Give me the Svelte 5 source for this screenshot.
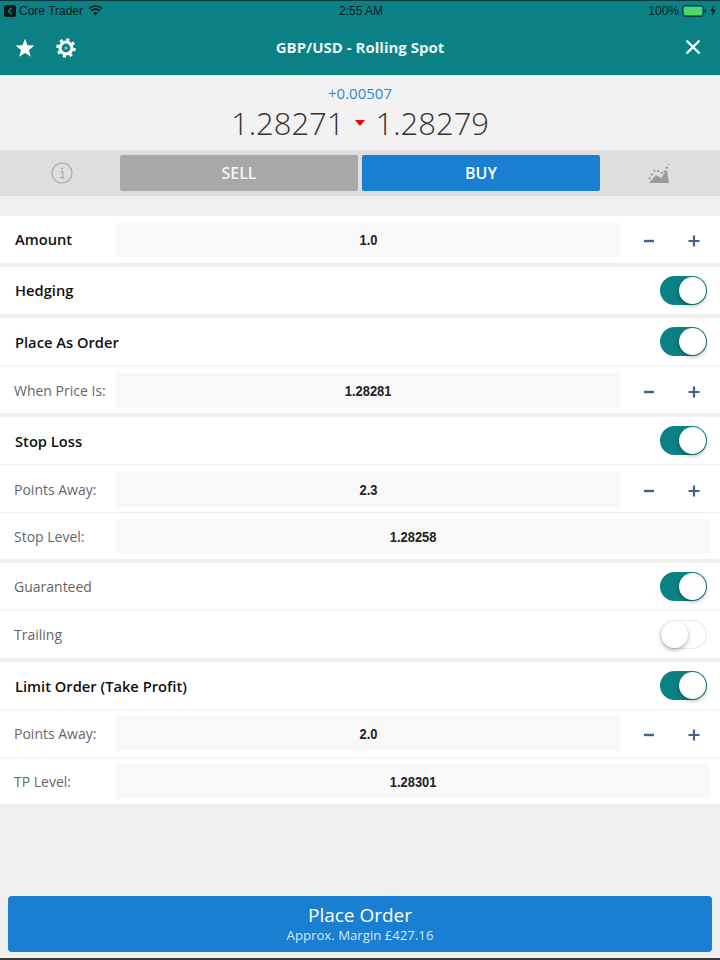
<script>
  const groups = [
    [{ label: 'Amount', bold: true, value: '1.0', steppers: true }],
    [{ label: 'Hedging', bold: true, toggle: true }],
    [
      { label: 'Place As Order', bold: true, toggle: true },
      { label: 'When Price Is:', value: '1.28281', steppers: true, nudge: true }
    ],
    [
      { label: 'Stop Loss', bold: true, toggle: true },
      { label: 'Points Away:', value: '2.3', steppers: true, nudge: true },
      { label: 'Stop Level:', value: '1.28258' }
    ],
    [
      { label: 'Guaranteed', toggle: true },
      { label: 'Trailing', toggle: 'off' }
    ],
    [
      { label: 'Limit Order (Take Profit)', bold: true, toggle: true },
      { label: 'Points Away:', value: '2.0', steppers: true },
      { label: 'TP Level:', value: '1.28301' }
    ]
  ]
</script>

<div class="page">
  <header class="top">
    <div class="status">
      <div class="status_side">
        <svg class="back" width="12" height="12" viewBox="0 0 12 12">
          <rect width="12" height="12" rx="2.5" fill="#0a1a1c" />
          <path d="M7.4 3 L4.6 6 L7.4 9" fill="none" stroke="#0b8185" stroke-width="1.6" />
        </svg>
        <span>Core Trader</span>
        <svg class="wifi" width="15" height="11" viewBox="0 0 15 11">
          <path d="M1 3.6 A9.4 9.4 0 0 1 14 3.6" fill="none" stroke="#0a1a1c" stroke-width="1.7" />
          <path d="M3.2 5.9 A6.2 6.2 0 0 1 11.8 5.9" fill="none" stroke="#0a1a1c" stroke-width="1.7" />
          <path d="M5.3 8 A3.1 3.1 0 0 1 9.7 8 L7.5 10.4 Z" fill="#0a1a1c" />
        </svg>
      </div>
      <div class="clock">2:55 AM</div>
      <div class="status_side right">
        <span>100%</span>
        <svg width="25" height="12" viewBox="0 0 25 12">
          <rect x="0.5" y="0.5" width="21" height="11" rx="2.5" fill="none" stroke="#0a3a3e" />
          <rect x="2" y="2" width="18" height="8" rx="1" fill="#4cd964" />
          <rect x="22.5" y="4" width="1.5" height="4" fill="#0a3a3e" />
        </svg>
        <svg width="6" height="11" viewBox="0 0 6 11">
          <path d="M3.8 0 L0.4 6.2 L2.6 6.2 L2 11 L5.6 4.6 L3.3 4.6 Z" fill="#0a1a1c" />
        </svg>
      </div>
    </div>
    <div class="title_bar">
      <div class="title_icons">
        <svg width="20" height="20" viewBox="0 0 20 20">
          <path d="M10 0.8 L12.5 7.2 L19.4 7.6 L14 12 L15.8 18.8 L10 15 L4.2 18.8 L6 12 L0.6 7.6 L7.5 7.2 Z" fill="#fff" />
        </svg>
        <svg width="20" height="20" viewBox="0 0 20 20">
          <circle cx="10" cy="10" r="6" fill="none" stroke="#fff" stroke-width="3.2" />
          <circle cx="10" cy="10" r="8.5" fill="none" stroke="#fff" stroke-width="2.6" stroke-dasharray="3.1 3.57" />
          <circle cx="10" cy="10" r="1.6" fill="#8cc4c6" />
        </svg>
      </div>
      <div class="title">GBP/USD - Rolling Spot</div>
      <svg class="close" width="16" height="16" viewBox="0 0 16 16">
        <path d="M1.5 1.5 L14.5 14.5 M14.5 1.5 L1.5 14.5" stroke="#fff" stroke-width="2.4" />
      </svg>
    </div>
  </header>

  <section class="prices">
    <div class="change">+0.00507</div>
    <div class="quote">
      <span>1.28271</span>
      <i class="arrow"></i>
      <span>1.28279</span>
    </div>
  </section>

  <section class="trade_bar">
    <div class="side_icon">
      <svg width="22" height="22" viewBox="0 0 22 22">
        <circle cx="11" cy="11" r="10" fill="none" stroke="#a8a8a8" stroke-width="1.2" />
        <circle cx="11" cy="6.6" r="1.1" fill="#a8a8a8" />
        <path d="M9.4 9.6 H11.8 V15.6 H13 M9.2 15.6 H11.8" fill="none" stroke="#a8a8a8" stroke-width="1.1" />
      </svg>
    </div>
    <button class="trade sell">SELL</button>
    <button class="trade buy">BUY</button>
    <div class="side_icon">
      <svg width="24" height="22" viewBox="0 0 24 22">
        <path d="M2 21 L9 13 L14 16 L20 8 L22 21 Z" fill="#9a9a9a" />
        <path d="M2 17 L8 8 L14 10 L16 12 L22 2" fill="none" stroke="#9a9a9a" stroke-width="2" stroke-dasharray="2 2.4" />
      </svg>
    </div>
  </section>

  <div class="form">
    {#each groups as group}
      <div class="group">
        {#each group as row}
          <div class="row" class:nudge={row.nudge}>
            <div class="label" class:bold={row.bold}>{row.label}</div>
            {#if row.value}
              <div class="value"><span>{row.value}</span></div>
            {/if}
            {#if row.steppers}
              <div class="steppers">
                <svg width="12" height="12" viewBox="0 0 12 12"><path d="M1 6 H11" stroke="#44608f" stroke-width="2.4" /></svg>
                <svg width="12" height="12" viewBox="0 0 12 12"><path d="M0.5 6 H11.5 M6 0.5 V11.5" stroke="#44608f" stroke-width="2.2" /></svg>
              </div>
            {/if}
            {#if row.toggle}
              <div class="toggle" class:off={row.toggle === 'off'}><i></i></div>
            {/if}
          </div>
        {/each}
      </div>
    {/each}
  </div>

  <div class="footer">
    <button class="place">
      <span class="place_title">Place Order</span>
      <span class="place_sub">Approx. Margin £427.16</span>
    </button>
  </div>
</div>

<style>
  :global(body) {
    margin: 0;
    background: #f0f0f0;
  }

  .page {
    height: 960px;
    box-sizing: border-box;
    display: flex;
    flex-direction: column;
    font-family: "Open Sans", sans-serif;
    background: #f0f0f0;
    border-bottom: 2px solid #3c3c3c;
    overflow: hidden;
  }

  .top {
    height: 75px;
    flex: none;
    background: #0b8185;
    border-top: 1px solid #0a3a3e;
    box-sizing: border-box;
  }

  .status {
    height: 19px;
    padding: 0 3px 0 4px;
    display: flex;
    align-items: center;
    justify-content: space-between;
    font-family: "Liberation Sans", sans-serif;
    font-size: 12px;
    color: #0a1a1c;
    position: relative;
  }

  .status_side {
    display: flex;
    align-items: center;
    gap: 3px;
  }

  .status_side.right {
    gap: 3px;
    padding-right: 1px;
  }

  .wifi {
    margin-left: 2px;
  }

  .clock {
    position: absolute;
    left: 2px;
    right: 0;
    text-align: center;
  }

  .title_bar {
    height: 55px;
    padding: 0 19px 0 15px;
    display: flex;
    align-items: center;
    justify-content: space-between;
    box-sizing: border-box;
    position: relative;
  }

  .title_icons {
    display: flex;
    gap: 21px;
  }

  .title {
    position: absolute;
    left: 0;
    right: 0;
    margin-top: -2px;
    text-align: center;
    font-size: 15px;
    font-weight: 700;
    color: #e9f4f4;
  }

  .close {
    margin-top: -2px;
  }

  .prices {
    height: 75px;
    flex: none;
    box-sizing: border-box;
    padding-top: 8px;
    background: #f2f2f2;
    border-top: 1px solid #e4e4e4;
    text-align: center;
  }

  .change {
    font-size: 15px;
    line-height: 19px;
    color: #2a88d8;
  }

  .quote {
    display: flex;
    justify-content: center;
    align-items: center;
    gap: 10.5px;
    font-size: 31px;
    font-weight: 300;
    line-height: 40px;
    color: #333;
  }

  .arrow {
    width: 0;
    height: 0;
    border-left: 5px solid transparent;
    border-right: 5px solid transparent;
    border-top: 6px solid #f00000;
  }

  .trade_bar {
    height: 46px;
    flex: none;
    display: grid;
    grid-template-columns: 116px 238px 238px 1fr;
    gap: 0 4px;
    align-items: center;
    background: #dedede;
    box-sizing: border-box;
  }

  .side_icon {
    display: flex;
    justify-content: center;
    align-items: center;
  }

  .side_icon:first-child {
    margin-right: -8px;
  }

  .side_icon:last-child {
    margin-right: 6px;
  }

  .trade {
    height: 36px;
    border: 0;
    border-radius: 2px;
    color: #fff;
    font-family: inherit;
    font-size: 16px;
    font-weight: 600;
    padding: 0;
  }

  .sell {
    background: #a8a8a8;
    color: #f5f5f5;
  }

  .buy {
    background: #1a7fd0;
  }

  .form {
    margin-top: 20px;
    display: flex;
    flex-direction: column;
    gap: 4px;
  }

  .group {
    background: #fff;
    display: flex;
    flex-direction: column;
  }

  .row {
    height: 47px;
    padding: 0 13px 0 14px;
    display: flex;
    align-items: center;
  }

  .row + .row {
    border-top: 1px solid #f0f0f0;
  }

  .row.nudge {
    height: 45px;
    padding-top: 2px;
  }

  .row:nth-child(3) {
    height: 46px;
  }

  .label {
    width: 102px;
    flex: none;
    font-size: 14px;
    color: #666;
    white-space: nowrap;
  }

  .label.bold {
    color: #111;
    font-weight: 600;
    font-size: 14.7px;
    margin-left: 1px;
    margin-right: -1px;
  }

  .group:nth-child(-n+2) .label.bold {
    margin-top: -2px;
  }

  .value {
    flex: 1;
    height: 35px;
    line-height: 35px;
    border-radius: 4px;
    background: #f8f8f8;
    text-align: center;
    font-family: "Liberation Sans", sans-serif;
    font-size: 15px;
    font-weight: 700;
    color: #222;
    margin-right: -3px;
  }

  .value span {
    display: inline-block;
    transform: scaleX(0.86);
  }

  .steppers {
    width: 100px;
    flex: none;
    display: flex;
    justify-content: space-between;
    padding: 3px 20px 0 23px;
    box-sizing: border-box;
    margin-right: -13px;
    margin-left: 3px;
  }

  .toggle {
    margin-left: auto;
    width: 47px;
    height: 29px;
    border-radius: 15px;
    background: #0b8185;
    position: relative;
  }

  .toggle i {
    position: absolute;
    top: 1px;
    right: 1px;
    width: 27px;
    height: 27px;
    border-radius: 50%;
    background: #fff;
    box-shadow: 0 2px 4px rgba(0, 0, 0, 0.3);
  }

  .toggle.off {
    background: #fff;
    box-shadow: inset 0 0 0 1px #eaeaea;
  }

  .toggle.off i {
    right: auto;
    left: 1px;
  }

  .footer {
    margin-top: auto;
    padding: 0 8px 6px;
  }

  .place {
    width: 100%;
    height: 56px;
    border: 0;
    border-radius: 4px;
    background: #1a7fd0;
    color: #fff;
    font-family: inherit;
    display: flex;
    flex-direction: column;
    align-items: center;
    justify-content: center;
    padding: 0 0 2px;
  }

  .place_title {
    font-size: 19px;
    font-weight: 500;
    line-height: 24px;
  }

  .place_sub {
    font-size: 13.2px;
    line-height: 16px;
    color: #d4e7f7;
  }
</style>
